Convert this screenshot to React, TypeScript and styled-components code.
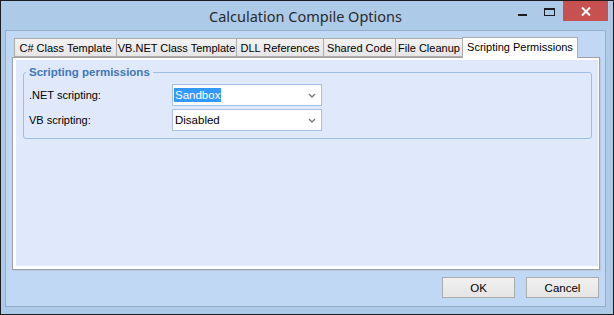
import React from "react";
import styled, { createGlobalStyle } from "styled-components";

const GlobalStyle = createGlobalStyle`
  html, body {
    margin: 0;
    padding: 0;
    background: #ffffff;
  }
  * {
    box-sizing: border-box;
  }
  body {
    font-family: "Liberation Sans", Arial, sans-serif;
    font-size: 11px;
    color: #000;
  }
`;

const tabs = [
  { label: "C# Class Template", width: 103 },
  { label: "VB.NET Class Template", width: 121 },
  { label: "DLL References", width: 88 },
  { label: "Shared Code", width: 73 },
  { label: "File Cleanup", width: 68 },
  { label: "Scripting Permissions", width: 116, active: true },
];

const settings = [
  { label: ".NET scripting:", value: "Sandbox", selected: true },
  { label: "VB scripting:", value: "Disabled", selected: false },
];

function Chevron() {
  return (
    <svg width="8" height="5" viewBox="0 0 8 5">
      <path d="M1 1 L4 4 L7 1" fill="none" stroke="#7a7a7a" strokeWidth="1.4" />
    </svg>
  );
}

function CloseGlyph() {
  return (
    <svg width="10" height="9" viewBox="0 0 10 9">
      <path d="M1 0.5 L9 8.5 M9 0.5 L1 8.5" stroke="#fff" strokeWidth="2" />
    </svg>
  );
}

function App() {
  return (
    <>
      <GlobalStyle />
      <Window>
        <TitleBar>
          <span />
          <Title>Calculation Compile Options</Title>
          <Controls>
            <CaptionButton>
              <MinGlyph />
            </CaptionButton>
            <CaptionButton>
              <MaxGlyph />
            </CaptionButton>
            <CloseButton>
              <CloseGlyph />
            </CloseButton>
          </Controls>
        </TitleBar>
        <Client>
          <TabStrip>
            {tabs.map((t) => (
              <Tab key={t.label} $width={t.width} $active={!!t.active}>
                {t.label}
              </Tab>
            ))}
          </TabStrip>
          <Panel>
            <Page>
              <Group>
                <Legend>Scripting permissions</Legend>
                {settings.map((s) => (
                  <Row key={s.label}>
                    <Label>{s.label}</Label>
                    <Combo>
                      <ComboText $selected={s.selected}>{s.value}</ComboText>
                      <Chevron />
                    </Combo>
                  </Row>
                ))}
              </Group>
            </Page>
          </Panel>
          <ButtonRow>
            <Button>OK</Button>
            <Button>Cancel</Button>
          </ButtonRow>
        </Client>
      </Window>
    </>
  );
}

export default App;

const Window = styled.div`
  width: 614px;
  height: 315px;
  border: 1px solid #1c1c1c;
  background: #adcae9;
  display: flex;
  flex-direction: column;
`;
const TitleBar = styled.div`
  height: 29px;
  display: grid;
  grid-template-columns: 1fr auto 1fr;
  align-items: center;
`;
const Title = styled.div`
  font-family: "Noto Sans", "Open Sans", sans-serif;
  font-size: 14.5px;
  color: #2a2a2a;
  padding-right: 3px;
`;
const Controls = styled.div`
  justify-self: end;
  align-self: start;
  display: flex;
  margin-right: 5px;
`;
const CaptionButton = styled.div`
  width: 27px;
  height: 20px;
  display: flex;
  align-items: center;
  justify-content: center;
`;
const MinGlyph = styled.div`
  width: 9px;
  height: 2px;
  margin-top: 8px;
  background: #1e1e1e;
`;
const MaxGlyph = styled.div`
  width: 11px;
  height: 8px;
  margin-top: 1px;
  border: 1px solid #1e1e1e;
  border-top-width: 2px;
`;
const CloseButton = styled.div`
  width: 45px;
  height: 20px;
  background: #c75050;
  display: flex;
  align-items: center;
  justify-content: center;
`;
const Client = styled.div`
  flex: 1;
  margin: 0 7px 7px 4px;
  border: 1px solid #93adcb;
  background: #c1d8f5;
  padding: 6px 5px 8px 6px;
  display: flex;
  flex-direction: column;
`;
const TabStrip = styled.div`
  height: 20px;
  display: flex;
  align-items: flex-end;
  padding-left: 2px;
  position: relative;
  z-index: 1;
`;
const Tab = styled.div<{ $width: number; $active: boolean }>`
  width: ${(p) => p.$width}px;
  height: ${(p) => (p.$active ? 21 : 19)}px;
  margin-bottom: ${(p) => (p.$active ? -1 : 0)}px;
  margin-right: ${(p) => (p.$active ? 0 : -1)}px;
  border: 1px solid #acacac;
  border-bottom: ${(p) => (p.$active ? "none" : "1px solid #acacac")};
  background: ${(p) =>
    p.$active ? "#ffffff" : "linear-gradient(#f2f2f2, #e6e6e6)"};
  display: flex;
  align-items: ${(p) => (p.$active ? "flex-start" : "center")};
  padding-top: ${(p) => (p.$active ? 3 : 0)}px;
  justify-content: center;
  white-space: nowrap;
  color: #000;
`;
const Panel = styled.div`
  flex: 1;
  border: 1px solid #a0a0a0;
  box-shadow: 1px 1px 0 #b8c9de;
  background: #ffffff;
  padding: 2px 1px 3px 3px;
  display: flex;
`;
const Page = styled.div`
  flex: 1;
  background: #dfe9fb;
  padding: 6px 6px 0 7px;
`;
const Group = styled.fieldset`
  margin: 0;
  border: 1px solid #9dbfe4;
  border-radius: 3px;
  padding: 6px 6px 7px 5px;
  display: flex;
  flex-direction: column;
  gap: 3px;
`;
const Legend = styled.legend`
  font-weight: bold;
  font-size: 11.5px;
  color: #4277b8;
  padding: 0 3px;
  margin-left: -3px;
`;
const Row = styled.div`
  display: flex;
  align-items: center;
  height: 22px;
`;
const Label = styled.div`
  width: 143px;
`;
const Combo = styled.div`
  width: 150px;
  height: 22px;
  border: 1px solid #a6c1e1;
  background: #ffffff;
  display: flex;
  align-items: center;
  justify-content: space-between;
  padding: 0 5px 0 1px;
  font-size: 11.5px;
`;
const ComboText = styled.span<{ $selected: boolean }>`
  padding: 1px 1px;
  background: ${(p) => (p.$selected ? "#3399ff" : "transparent")};
  color: ${(p) => (p.$selected ? "#ffffff" : "#000")};
`;
const ButtonRow = styled.div`
  margin-top: 7px;
  display: flex;
  justify-content: flex-end;
  gap: 11px;
  padding-right: 1px;
`;
const Button = styled.div`
  width: 73px;
  height: 21px;
  border: 1px solid #acacac;
  background: linear-gradient(#f0f0f0, #e5e5e5);
  display: flex;
  align-items: center;
  justify-content: center;
  font-size: 11.5px;
`;
